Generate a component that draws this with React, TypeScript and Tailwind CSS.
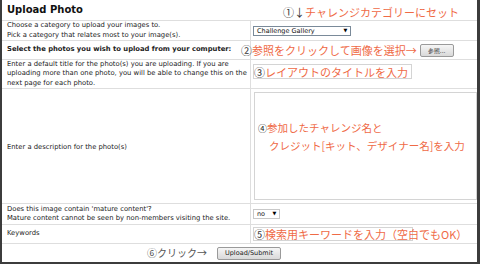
import React from "react";

const en = "font-['DejaVu_Sans',Verdana,sans-serif]";
const jp = "font-['Noto_Sans_CJK_JP',sans-serif]";

function Note({ n, text, className = "" }: { n: string; text: string; className?: string }) {
  return (
    <span className={`${jp} whitespace-nowrap text-[11px] leading-[14px] ${className}`}>
      <span className="text-[#333]">{n}</span>
      <span className="text-[#ef6a46]">{text}</span>
    </span>
  );
}

function Row({ h, children }: { h: string; children: React.ReactNode }) {
  return <div className={`flex border-t border-[#dedede] ${h}`}>{children}</div>;
}

export default function App() {
  return (
    <div className={`w-[480px] h-[264px] bg-white border-l-2 border-r-[3px] border-b-2 border-[#3c3c3c] text-[#222] ${en} text-[6.8px] leading-[9.5px] overflow-hidden`}>
      {/* title */}
      <div className="flex h-[20px] items-center pl-[5px]">
        <h1 className="text-[10px] font-bold text-[#111] w-[276px]">Upload Photo</h1>
        <Note n="①↓" text="チャレンジカテゴリーにセット" className="mt-[3px]" />
      </div>

      {/* category */}
      <Row h="h-[20px]">
        <div className="w-[249px] border-r border-[#dedede] pl-[5px] flex flex-col justify-center">
          <p>Choose a category to upload your images to.</p>
          <p>Pick a category that relates most to your image(s).</p>
        </div>
        <div className="flex items-center pl-[2px]">
          <div className="flex h-[10px] w-[98px] border border-[#7a8a99] bg-white">
            <span className="flex-1 pl-[3px] text-[6.5px] leading-[8px] text-[#111]">Challenge Gallery</span>
            <span className="flex w-[9px] items-center justify-center text-[5px] text-black">▼</span>
          </div>
        </div>
      </Row>

      {/* file */}
      <Row h="h-[19px]">
        <div className="w-[249px] border-r border-[#dedede] pl-[5px] flex items-center font-bold">
          Select the photos you wish to upload from your computer:
        </div>
        <div className="flex items-center -ml-[10px] gap-[3px]">
          <Note n="②" text="参照をクリックして画像を選択→" />
          <button className="h-[13px] w-[34px] rounded-[2px] border border-[#9a9a9a] bg-gradient-to-b from-[#f6f6f6] to-[#d9d9d9] text-[6px] leading-[11px] text-[#222]">
            参照...
          </button>
        </div>
      </Row>

      {/* title input */}
      <Row h="h-[29px]">
        <div className="w-[249px] border-r border-[#dedede] pl-[5px] flex flex-col justify-center">
          <p>Enter a default title for the photo(s) you are uploading. If you are</p>
          <p>uploading more than one photo, you will be able to change this on the</p>
          <p>next page for each photo.</p>
        </div>
        <div className="pl-[2px] pt-[4px]">
          <div className="h-[15px] w-[159px] border border-[#d4d4d4] flex items-center">
            <Note n="③" text="レイアウトのタイトルを入力" />
          </div>
        </div>
      </Row>

      {/* description */}
      <Row h="h-[115px]">
        <div className="w-[249px] border-r border-[#dedede] pl-[5px] flex items-center pt-[3px]">
          Enter a description for the photo(s)
        </div>
        <div className="flex-1 pl-[3px] pt-[3px] pb-[3px]">
          <div className="h-[108px] border border-[#d4d4d4] pl-[3px] pt-[26px]">
            <p className={`${jp} text-[10.5px] leading-[17px] text-[#ef6a46] whitespace-nowrap`}>
              <span className="text-[9px] text-[#222]">④</span>参加したチャレンジ名と
            </p>
            <p className={`${jp} text-[10.5px] leading-[17px] text-[#ef6a46] pl-[11px] whitespace-nowrap`}>
              クレジット[キット、デザイナー名]を入力
            </p>
          </div>
        </div>
      </Row>

      {/* mature */}
      <Row h="h-[21px]">
        <div className="w-[249px] border-r border-[#dedede] pl-[5px] flex flex-col justify-center">
          <p>Does this image contain 'mature content'?</p>
          <p>Mature content cannot be seen by non-members visiting the site.</p>
        </div>
        <div className="flex items-center pl-[2px]">
          <div className="flex h-[10px] w-[27px] border border-[#c8c8c8] bg-white">
            <span className="flex-1 pl-[3px] text-[6.5px] leading-[8px]">no</span>
            <span className="flex w-[9px] items-center justify-center text-[5px] text-black">▼</span>
          </div>
        </div>
      </Row>

      {/* keywords */}
      <Row h="h-[19px]">
        <div className="w-[249px] border-r border-[#dedede] pl-[5px] flex items-center">Keywords</div>
        <div className="flex items-center pl-[2px]">
          <div className="h-[14px] w-[160px] border border-[#d4d4d4] flex items-center">
            <Note n="⑤" text="検索用キーワードを入力（空白でもOK）" />
          </div>
        </div>
      </Row>

      {/* submit */}
      <div className="flex h-[19px] items-center border-t border-[#dedede] pl-[145px] gap-[10px]">
        <span className={`${jp} text-[10px] leading-[14px] text-[#555]`}>⑥クリック→</span>
        <button className="h-[13px] w-[64px] rounded-[2px] border border-[#9a9a9a] bg-gradient-to-b from-[#f6f6f6] to-[#d9d9d9] text-[6.5px] leading-[11px] text-[#222]">
          Upload/Submit
        </button>
      </div>
    </div>
  );
}
